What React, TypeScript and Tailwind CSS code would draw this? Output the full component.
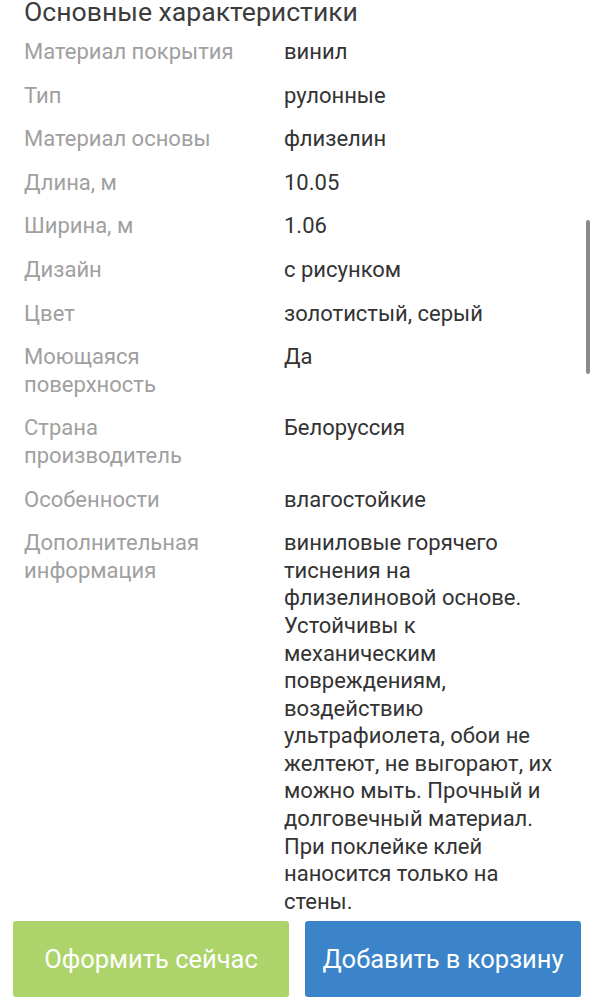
import React from "react";

const rows: [string, string][] = [
  ["Материал покрытия", "винил"],
  ["Тип", "рулонные"],
  ["Материал основы", "флизелин"],
  ["Длина, м", "10.05"],
  ["Ширина, м", "1.06"],
  ["Дизайн", "с рисунком"],
  ["Цвет", "золотистый, серый"],
  ["Моющаяся поверхность", "Да"],
  ["Страна производитель", "Белоруссия"],
  ["Особенности", "влагостойкие"],
  [
    "Дополнительная информация",
    "виниловые горячего тиснения на флизелиновой основе. Устойчивы к механическим повреждениям, воздействию ультрафиолета, обои не желтеют, не выгорают, их можно мыть. Прочный и долговечный материал. При поклейке клей наносится только на стены.",
  ],
];

export default function App() {
  return (
    <div
      className="relative w-[594px] h-[999px] overflow-hidden bg-white"
      style={{ fontFamily: "Roboto, 'Noto Sans', sans-serif" }}
    >
      <div className="pl-[24px] pr-[24px] mt-[-4px]">
        <h2 className="text-[26.6px] leading-[32px] text-[#3c3c3c] font-normal whitespace-nowrap">
          Основные характеристики
        </h2>
        <div className="mt-[10px] flex flex-col gap-[16px] pb-[100px]">
          {rows.map(([k, v]) => (
            <div key={k} className="flex text-[22px] leading-[27.6px]">
              <div className="w-[260px] shrink-0 pr-[40px] text-[#a0a0a0]">{k}</div>
              <div className="w-[280px] text-[#333333]">{v}</div>
            </div>
          ))}
        </div>
      </div>

      <div className="absolute right-[4px] top-[220px] w-[4px] h-[154px] rounded-full bg-[#8a8a8a]" />

      <div className="absolute left-0 right-0 bottom-0 h-[87px] bg-white flex gap-[16px] pl-[13px] pr-[13px] pt-[9px] pb-[2px]">
        <button className="flex-1 rounded-[3px] bg-[#acd46b] text-white text-[25.5px] flex items-center justify-center">
          Оформить сейчас
        </button>
        <button className="flex-1 rounded-[3px] bg-[#3b84ca] text-white text-[25.5px] flex items-center justify-center">
          Добавить в корзину
        </button>
      </div>
    </div>
  );
}
